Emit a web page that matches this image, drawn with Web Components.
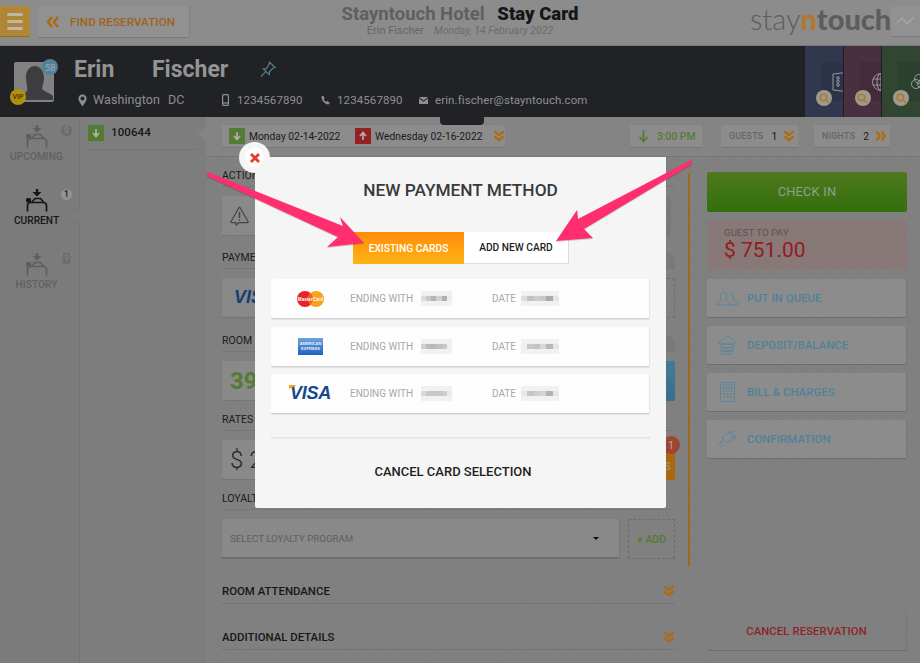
<!DOCTYPE html>
<html lang="en">
<head>
<meta charset="utf-8">
<title>Stay Card</title>
<style>
  html, body { margin: 0; padding: 0; }
  body {
    width: 920px; height: 663px; overflow: hidden; position: relative;
    background: #939393; color: #1e1e1e;
    font-family: Roboto, "Noto Sans", "Liberation Sans", sans-serif;
  }
  app-page { height: 663px; }
</style>
</head>
<body>
<app-page>
  <app-header slot="header"></app-header>
  <guest-bar slot="guest"></guest-bar>
  <side-nav slot="nav">
    <nav-item label="UPCOMING" count="0"></nav-item>
    <nav-item label="CURRENT" count="1" active></nav-item>
    <nav-item label="HISTORY" count="119"></nav-item>
  </side-nav>
  <res-list slot="list"></res-list>
  <stay-strip slot="strip"></stay-strip>
  <stay-form slot="form"></stay-form>
  <stay-actions slot="actions"></stay-actions>
</app-page>
<payment-modal>
  <card-row brand="mc"></card-row>
  <card-row brand="amex"></card-row>
  <card-row brand="visa"></card-row>
</payment-modal>

<script>
const CHEV_DOWN = `<svg width="12" height="12" viewBox="0 0 12 12" fill="none" stroke="#c47a14" stroke-width="2.4"><path d="M1.5 1.5 6 5l4.500-3.500M1.500 6.500 6 10l4.500-3.500"/></svg>`;
const CHEV_RIGHT = `<svg width="12" height="12" viewBox="0 0 12 12" fill="none" stroke="#c47a14" stroke-width="2.4"><path d="M1.500 1.500 5 6l-3.500 4.500M6.500 1.500 10 6l-3.500 4.500"/></svg>`;
const ARROW_SQ = (bg, up) => `<svg width="16" height="16" viewBox="0 0 16 16"><rect width="16" height="16" fill="${bg}"/><path d="${up ? 'M8 12V5M5 8l3-3.400L11 8' : 'M8 4v7M5 8l3 3.400L11 8'}" fill="none" stroke="#c8c8c8" stroke-width="1.700"/></svg>`;

class ShadowBase extends HTMLElement {
    constructor() {
        super();
        this.attachShadow({ mode: 'open' });
    }
    connectedCallback() {
        if (!this._rendered) {
            this.shadowRoot.innerHTML = this.markup();
            this._rendered = true;
        }
    }
}

class AppPage extends ShadowBase {
    markup() {
        return `
        <style>
          :host { display: flex; flex-direction: column; width: 920px; }
          .body { flex: 1; display: flex; min-height: 0; }
          .main { flex: 1; display: flex; flex-direction: column; min-width: 0; background: #939393 repeating-linear-gradient(45deg, rgba(0,0,0,.025) 0 1px, transparent 1px 3px); }
          .cols { flex: 1; display: flex; min-height: 0; }
        </style>
        <slot name="header"></slot>
        <slot name="guest"></slot>
        <div class="body">
          <slot name="nav"></slot>
          <slot name="list"></slot>
          <div class="main">
            <slot name="strip"></slot>
            <div class="cols">
              <slot name="form"></slot>
              <slot name="actions"></slot>
            </div>
          </div>
        </div>`;
    }
}

class AppHeader extends ShadowBase {
    markup() {
        return `
        <style>
          :host { display: flex; align-items: flex-start; padding-top: 6px; height: 39px; background: #a0a0a0; border-bottom: 1px solid #8a8a8a; }
          .menu { width: 30px; height: 31px; background: #c9993f; border-radius: 0 2px 2px 0; border-bottom: 1px solid #a87c2c; box-sizing: border-box; display: flex; flex-direction: column; justify-content: center; gap: 4px; padding: 0 7px; }
          .menu i { display: block; height: 3px; border-radius: 2px; background: #d9d0bd; }
          .find { margin-left: 8px; width: 152px; height: 32px; box-sizing: border-box; background: #a6a6a6; border-bottom: 1px solid #8a8a8a; border-right: 1px solid #929292; border-radius: 2px; display: flex; align-items: center; padding-left: 8px; gap: 11px; color: #b5701c; font-size: 11.600px; font-weight: 500; letter-spacing: .1px; }
          .title { flex: 1; text-align: center; margin-top: -1px; padding-right: 20px; }
          .top { font-size: 18.500px; font-weight: 700; color: #6d6d6d; white-space: nowrap; line-height: 18px; }
          .top b { color: #1a1a1a; margin-left: 8px; }
          .sub { font-size: 11px; color: #737373; white-space: nowrap; line-height: 14px; margin-top: 1px; }
          .sub em { color: #7b7b7b; margin-left: 7px; font-size: 10.500px; }
          .logo { font-family: Lato, sans-serif; font-size: 29px; line-height: 30px; color: #6a6a6a; font-weight: 300; white-space: nowrap; width: 141px; flex: none; margin-top: -2px; }
          .logo b { font-weight: 900; }
          .logo .n { color: #c98a34; }
          .graph { width: 29px; height: 31px; flex: none; background: #a6a6a6; border-bottom: 1px solid #8a8a8a; box-sizing: border-box; display: flex; align-items: center; justify-content: center; }
        </style>
        <div class="menu"><i></i><i></i><i></i></div>
        <div class="find">
          <svg width="13" height="12" viewBox="0 0 13 12" fill="none" stroke="#c47a14" stroke-width="2.600"><path d="M6 1 2 6l4 5M12 1 8 6l4 5"/></svg>
          <span>FIND RESERVATION</span>
        </div>
        <div class="title">
          <div class="top">Stayntouch Hotel <b>Stay Card</b></div>
          <div class="sub">Erin Fischer <em>Monday, 14 February 2022</em></div>
        </div>
        <div class="logo">stay<b class="n">n</b><b>touch</b></div>
        <div class="graph"><svg width="20" height="12" viewBox="0 0 20 12" fill="none" stroke="#bdbdbd" stroke-width="1.400"><path d="M1 8l5-5 5 6 7-7"/></svg></div>`;
    }
}

class GuestBar extends ShadowBase {
    markup() {
        const tile = (bg, icon) => `<div class="tile" style="background:${bg}"><div class="inner">${icon}</div><span class="mag"><svg width="11" height="11" viewBox="0 0 11 11" fill="none" stroke="#c98a30" stroke-width="1.600"><circle cx="4.400" cy="4.400" r="3.200"/><path d="M6.800 6.800 10 10"/></svg></span></div>`;
        return `
        <style>
          :host { display: flex; height: 71px; background: #26272b; color: #a3a3a3; }
          .avatar { position: relative; width: 40px; height: 40px; margin: 16px 0 0 14px; background: #939393; border-radius: 2px; flex: none; }
          .avatar svg { display: block; }
          .age { position: absolute; right: -4px; top: -3px; width: 16px; height: 16px; border-radius: 50%; background: #6093aa; color: #a8c3cf; font-size: 9.500px; display: grid; place-items: center; }
          .vip { position: absolute; left: -4px; bottom: -3px; width: 16px; height: 16px; border-radius: 50%; background: #c9a40e; color: #5e4f08; font-size: 7px; font-weight: 700; display: grid; place-items: center; }
          .info { flex: 1; margin-left: 20px; min-width: 0; }
          .name { display: flex; align-items: center; margin-top: 7px; height: 32px; font-size: 23px; font-weight: 700; color: #a9a9a9; }
          .name svg { margin-left: 32px; }
          .row { display: flex; align-items: center; margin-top: 5px; font-size: 11.500px; letter-spacing: .1px; white-space: nowrap; line-height: 20px; }
          .row svg { flex: none; }
          .tiles { display: flex; width: 116px; flex: none; }
          .tile { flex: 1; position: relative; border-left: 1px solid #23242a; overflow: hidden; }
          .inner { position: absolute; left: 16px; top: 16px; width: 40px; height: 39px; background: rgba(0,0,0,.08); display: flex; align-items: center; padding-left: 11px; box-sizing: border-box; }
          .mag { position: absolute; left: 11px; bottom: 11px; width: 16px; height: 16px; border-radius: 50%; background: #b5b0a5; display: grid; place-items: center; }
        </style>
        <div class="avatar">
          <svg width="40" height="40" viewBox="0 0 40 40"><path d="M8 38c0-4 3-7 5-9 1-4-1-8-1-14 0-7 4-11 9-11s9 5 9 12c0 5-2 8-2 11 3 3 8 4 11 7v4z" fill="#44464b"/></svg>
          <span class="age">58</span><span class="vip">VIP</span>
        </div>
        <div class="info">
          <div class="name"><span style="width:78px">Erin</span><span>Fischer</span>
            <svg width="16" height="17" viewBox="0 0 16 17" fill="none" stroke="#5f93ab" stroke-width="1.200"><path d="M9.500 1.200 15 6.400l-2 .6-3.400 3.600-.4 3L3.400 8l3-.3L9 3.400zM5.500 10.800 1 15.600"/></svg>
          </div>
          <div class="row">
            <svg style="margin-left:4px" width="9" height="13" viewBox="0 0 9 13"><path d="M4.500.5C2 .5.4 2.300.4 4.500c0 2.600 3 6 4.100 8 1.100-2 4.100-5.400 4.100-8C8.600 2.300 7 .5 4.500.5zm0 6a2 2 0 1 1 0-4 2 2 0 0 1 0 4z" fill="#a3a3a3"/></svg>
            <span style="margin-left:6px;width:75px;font-size:12.500px">Washington</span><span style="width:54px;font-size:12.500px">DC</span>
            <svg width="7" height="12" viewBox="0 0 7 12" fill="none" stroke="#a3a3a3" stroke-width="1.200"><rect x=".6" y=".6" width="5.800" height="10.800" rx="1"/><path d="M.6 9h5.800"/></svg>
            <span style="margin-left:8px;width:84px">1234567890</span>
            <svg width="9" height="10" viewBox="0 0 9 10"><path d="M2 .5 3.600 3 2.800 4.300c.5 1.200 1.200 2 2.400 2.500L6.400 6 8.800 7.800 7.500 9.500C3.500 9.300.4 5.500.5 1.600z" fill="#a3a3a3"/></svg>
            <span style="margin-left:7px;width:82px">1234567890</span>
            <svg width="9" height="7" viewBox="0 0 9 7"><path d="M0 0h9L4.500 3.500zM0 1.300 4.500 4.800 9 1.300V7H0z" fill="#a3a3a3"/></svg>
            <span style="margin-left:7px">erin.fischer@stayntouch.com</span>
          </div>
        </div>
        <div class="tiles">
          ${tile('#384059', `<svg width="14" height="20" viewBox="0 0 14 20" fill="none" stroke="#b5b8c2" stroke-width=".9"><path d="M1 2 13 .6v18.800L1 18z"/><circle cx="6" cy="6" r="1.300"/><circle cx="6" cy="9.500" r="1.300"/><circle cx="6" cy="13" r="1.300"/></svg>`)}
          ${tile('#553648', `<svg width="20" height="20" viewBox="0 0 20 20" fill="none" stroke="#bfb3ba" stroke-width=".9"><circle cx="10" cy="10" r="8.500"/><ellipse cx="10" cy="10" rx="4" ry="8.500"/><path d="M2 7h16M2 13h16M10 1.500v17"/></svg>`)}
          ${tile('#37503a', `<svg width="20" height="18" viewBox="0 0 20 18" fill="none" stroke="#b5beb6" stroke-width=".9"><circle cx="10" cy="6" r="4.500"/><circle cx="7" cy="11" r="4.500"/><circle cx="13" cy="11" r="4.500"/></svg>`)}
        </div>`;
    }
}

class SideNav extends ShadowBase {
    markup() {
        return `
        <style>
          :host { display: flex; flex-direction: column; width: 80px; flex: none; background: #8c8c8c; padding-top: 8px; box-sizing: border-box; border-right: 1px solid #858585; }
          ::slotted(nav-item) { margin-bottom: 18px; }
        </style>
        <slot></slot>`;
    }
}

class NavItem extends ShadowBase {
    markup() {
        const active = this.hasAttribute('active');
        const col = active ? '#1a1a1a' : '#6b6b6b';
        return `
        <style>
          :host { display: flex; flex-direction: column; align-items: center; height: 46px; position: relative; padding-right: 6px; }
          .label { font-size: 10.200px; line-height: 14px; margin-top: 2px; font-weight: 500; color: ${active ? '#1a1a1a' : '#6f6f6f'}; }
          .count { position: absolute; left: 61px; top: 0; width: 11px; height: 11px; border-radius: 50%; background: ${active ? '#a8a8a8' : '#7b7b7b'}; color: ${active ? '#1a1a1a' : '#969696'}; font-size: 8.500px; font-weight: 500; line-height: 11px; display: flex; justify-content: center; white-space: nowrap; }
          .notch { position: absolute; right: -1px; top: 20px; width: 0; height: 0; border: 7px solid transparent; border-right: 7px solid #8f8f8f; border-left: 0; display: ${active ? 'block' : 'none'}; }
        </style>
        <svg width="22" height="23" viewBox="0 0 22 23" fill="none" stroke="${col}" stroke-width="1.700">
          <path d="M11 0v3" stroke-width="2.400"/><path d="M6.500 3h9L11 7.500z" fill="${col}" stroke="none"/>
          <path d="M1.500 22.500v-6C1.500 14.500 3 13.500 5 13.500h12c2 0 3.500 1 3.500 3v6"/>
          <path d="M6 13 9 9.500h5.500l3 3.500"/>
          <rect x="0" y="9" width="5" height="4.500" rx="1.500" fill="${col}" stroke="none"/>
        </svg>
        <div class="label">${this.getAttribute('label')}</div>
        <span class="count">${this.getAttribute('count')}</span>
        <span class="notch"></span>`;
    }
}

class ResList extends ShadowBase {
    markup() {
        return `
        <style>
          :host { display: block; width: 126px; flex: none; background: #8f8f8f; padding: 8px 8px 0 8px; box-sizing: border-box; position: relative; }
          .row { display: flex; align-items: center; gap: 7px; height: 16px; padding-bottom: 8px; border-bottom: 1px solid #848484; font-size: 11.500px; font-weight: 500; color: #1a1a1a; }
          .row span { margin-top: -3px; letter-spacing: .1px; }
          .notch { position: absolute; right: 0; top: 9px; border: 8px solid transparent; border-right: 8px solid #979797; border-left: 0; }
          svg { display: block; }
        </style>
        <div class="row">${ARROW_SQ('#5f8d39', false)}<span>100644</span></div>
        <span class="notch"></span>`;
    }
}

class StayChip extends ShadowBase {
    markup() {
        return `
        <style>
          :host { display: flex; align-items: center; height: 23px; background: #a0a0a0; border-bottom: 1px solid #888; border-radius: 2px; box-sizing: border-box; font-size: 10.300px; white-space: nowrap; }
          ::slotted(svg) { flex: none; display: block; }
        </style>
        <slot></slot>`;
    }
}

class StayStrip extends ShadowBase {
    markup() {
        return `
        <style>
          :host { display: flex; height: 40px; flex: none; box-sizing: border-box; padding: 8px 30px 0 16px; background: #979797; border-bottom: 1px solid #888; position: relative; }
          .tab { position: absolute; left: 234px; top: 0; width: 44px; height: 8px; background: #26272b; border-radius: 0 0 4px 4px; }
          .l { color: #747474; font-size: 8.800px; font-weight: 500; letter-spacing: .3px; }
          .dates { width: 283px; padding-left: 7px; margin-right: 125px; }
          .time { width: 72px; padding-left: 8px; margin-right: 19px; }
          .guests { width: 77px; padding-left: 8px; margin-right: 16px; }
          .nights { width: 76px; padding-left: 8px; }
          .d { width: 90px; margin-left: 4px; }
        </style>
        <span class="tab"></span>
        <stay-chip class="dates">
          ${ARROW_SQ('#5f8d39', false)}<span class="d" style="margin-right:16px">Monday 02-14-2022</span>
          ${ARROW_SQ('#a82626', true)}<span class="d" style="width:113px">Wednesday 02-16-2022</span>
          <span style="margin-left:6px;display:flex">${CHEV_DOWN}</span>
        </stay-chip>
        <stay-chip class="time">
          <svg width="11" height="14" viewBox="0 0 11 14" fill="none" stroke="#5f8d39" stroke-width="1.800"><path d="M5.500 1v11M1.500 8l4 4.500 4-4.500"/></svg>
          <span style="margin-left:8px;color:#5f8d39;font-weight:500">3:00 PM</span>
        </stay-chip>
        <stay-chip class="guests"><span class="l">GUESTS</span><span style="margin-left:8px">1</span><span style="margin-left:6px;display:flex">${CHEV_DOWN}</span></stay-chip>
        <stay-chip class="nights"><span class="l">NIGHTS</span><span style="margin-left:8px">2</span><span style="margin-left:6px;display:flex">${CHEV_RIGHT}</span></stay-chip>`;
    }
}

class FormSection extends ShadowBase {
    markup() {
        const pill = this.hasAttribute('pill') ? '<span class="pill"></span>' : '';
        return `
        <style>
          :host { display: block; }
          .head { display: flex; align-items: center; height: 21px; padding-bottom: 2px; box-sizing: border-box; border-bottom: 1px solid #878787; font-size: 10.500px; color: #222; margin-bottom: 9px; position: relative; overflow: hidden; }
          .pill { position: absolute; right: 0; bottom: 0; width: 26px; height: 16px; background: #8a8a8a; border-radius: 10px 10px 0 0; }
          .body { display: flex; gap: 8px; height: 40px; }
        </style>
        <div class="head">${this.getAttribute('label')}${pill}</div>
        <div class="body"><slot></slot></div>`;
    }
}

class StayForm extends ShadowBase {
    markup() {
        return `
        <style>
          :host { display: block; width: 453px; flex: none; margin-left: 16px; padding-top: 9px; }
          .card { background: #9d9d9d; border-bottom: 1px solid #848484; border-radius: 2px; flex: 1; display: flex; align-items: center; box-sizing: border-box; padding-left: 8px; position: relative; }
          .bar { position: absolute; right: 0; top: 0; bottom: 0; width: 6px; background: #8a8a8a; border-radius: 2px; }
          .dash { flex: none; width: 47px; border: 1px dashed #7d7d7d; box-sizing: border-box; display: grid; place-items: center; color: #5f8d39; font-size: 10.500px; font-weight: 500; }
          .blue { flex: none; width: 60px; background: linear-gradient(#4d8ea6, #3e7fa3); border-radius: 2px; }
          .orange { flex: none; width: 60px; background: #c4760f; border-radius: 2px; position: relative; color: #b5a894; font-size: 11px; font-weight: 500; display: flex; align-items: flex-end; justify-content: flex-end; padding: 0 4px 7px 0; box-sizing: border-box; }
          .badge { position: absolute; right: -5px; top: -4px; width: 18px; height: 18px; border-radius: 50%; background: #b6503a; color: #d5c2bc; font-size: 10px; font-weight: 400; display: grid; place-items: center; }
          .num { font-size: 24px; font-weight: 700; color: #5f8d39; }
          .rate { font-size: 24px; color: #2a2a2a; font-weight: 300; }
          .select { flex: none; width: 398px; height: 40px; background: #9d9d9d; border-bottom: 2px solid #7e7e7e; border-right: 1px solid #888; display: flex; align-items: center; justify-content: space-between; padding: 0 20px 0 8px; box-sizing: border-box; color: #6c6c6c; font-size: 9.700px; }
          .caret { width: 0; height: 0; border: 3px solid transparent; border-top: 3.500px solid #111; border-bottom: 0; }
          .fold { display: flex; align-items: center; justify-content: space-between; height: 24px; border-bottom: 1px solid #838383; font-size: 11.400px; font-weight: 500; color: #1a1a1a; margin-bottom: 21px; }
          .visa { font: italic 700 18px "Liberation Sans", sans-serif; color: #1a4780; margin-left: 4px; }
        </style>
        <form-section label="ACTIONS" style="margin-bottom:12px">
          <div class="card" style="margin-right:4px">
            <svg width="20" height="20" viewBox="0 0 20 20" fill="none" stroke="#4f4f4f" stroke-width="1.200"><path d="M9 1.500 1 15.500c-.3.700 0 1.200.8 1.200H6v2.300l3-2.300h8.200c.8 0 1.100-.5.800-1.200l-8-14c-.3-.400-.700-.400-1 0z"/><path d="M9.500 6v6M9.500 13.300v1.500" stroke-width="1.500"/></svg>
            <span class="bar"></span>
          </div>
        </form-section>
        <form-section label="PAYMENT" pill style="margin-bottom:13px">
          <div class="card"><span class="visa">VISA</span></div>
          <div class="dash"></div>
        </form-section>
        <form-section label="ROOM" pill style="margin-bottom:9px">
          <div class="card"><span class="num">39</span></div>
          <div class="blue"></div>
        </form-section>
        <form-section label="RATES &amp; ADDONS" style="margin-bottom:9px">
          <div class="card"><span class="rate">$ 2</span></div>
          <div class="orange">S<span class="badge">1</span></div>
        </form-section>
        <form-section label="LOYALTY" style="margin-bottom:20px">
          <div class="select"><span>SELECT LOYALTY PROGRAM</span><span class="caret"></span></div>
          <div class="dash">+ ADD</div>
        </form-section>
        <div class="fold"><span>ROOM ATTENDANCE</span>${CHEV_DOWN}</div>
        <div class="fold"><span>ADDITIONAL DETAILS</span>${CHEV_DOWN}</div>`;
    }
}

class ActionButton extends ShadowBase {
    markup() {
        const icon = this.hasAttribute('plain') ? '' : '<span class="ico"><slot name="icon"></slot></span>';
        return `
        <style>
          :host { display: flex; align-items: center; height: 39px; background: #a0a0a0; border-bottom: 1px solid #7d7d7d; border-right: 1px solid #888; border-radius: 2px; box-sizing: border-box; color: #5c93ae; font-size: 11.300px; font-weight: 500; letter-spacing: .1px; }
          .ico { width: 40px; display: flex; justify-content: center; flex: none; }
        </style>
        ${icon}<slot></slot>`;
    }
}

class StayActions extends ShadowBase {
    markup() {
        const s = 'fill="none" stroke="#6298b2" stroke-width="1"';
        return `
        <style>
          :host { display: flex; flex-direction: column; width: 200px; flex: none; margin-left: 32px; padding-top: 15px; padding-bottom: 12px; box-sizing: border-box; position: relative; }
          :host::before { content: ""; position: absolute; left: -19px; top: 16px; height: 393px; width: 2px; background: #ac7a1f; }
          .checkin { height: 40px; background: linear-gradient(#5a8a20, #3a7f10); border-radius: 2px; display: grid; place-items: center; color: #a9b4a0; font-size: 12.800px; letter-spacing: .2px; flex: none; padding-bottom: 1px; box-sizing: border-box; }
          .pay { height: 50px; margin: 8px 0 9px; background: #9b8989; border-radius: 2px; padding: 6px 0 0 17px; box-sizing: border-box; flex: none; }
          .pay small { display: block; font-size: 9.800px; line-height: 13px; color: #6c6060; }
          .pay b { display: block; font-size: 21px; font-weight: 400; line-height: 23px; color: #a92222; }
          action-button { flex: none; margin-bottom: 8px; }
          .cancel { margin-top: auto; margin-bottom: 0; justify-content: center; color: #a32a2a; background: #929292; }
        </style>
        <div class="checkin">CHECK IN</div>
        <div class="pay"><small>GUEST TO PAY</small><b>$ 751.00</b></div>
        <action-button>
          <svg slot="icon" width="25" height="15" viewBox="0 0 25 15" ${s}><path d="M1 14c0-3 3-3 5-4 1-1 0-2-.5-3C5 4 6 1 8.500 1s3.500 3 3 6c-.5 1-1.500 2-.5 3 2 1 4 1 4 4z"/><path d="M14 3.500c1-1 4-1 4.500 1.500 0 1.500-.5 3-1 3.500 1 1 6 .5 6 4 0 .8-.5 1.500-2 1.500H15"/></svg>
          PUT IN QUEUE</action-button>
        <action-button>
          <svg slot="icon" width="20" height="20" viewBox="0 0 20 20" ${s}><path d="M1 9 10 1l6 3 3 5"/><path d="M1 9h16"/><rect x="4" y="9" width="12" height="3.500" rx="1.700"/><rect x="4" y="12.500" width="12" height="3.500" rx="1.700"/><rect x="4" y="16" width="12" height="3" rx="1.500"/></svg>
          DEPOSIT/BALANCE</action-button>
        <action-button>
          <svg slot="icon" width="15" height="20" viewBox="0 0 15 20" ${s}><rect x=".5" y=".5" width="14" height="19" rx="1.500"/><rect x="3" y="3" width="9" height="3"/><path d="M3 9h2M6.500 9h2M10 9h2M3 12h2M6.500 12h2M10 12h2M3 15h2M6.500 15h2M10 15h2" stroke-width="1.500"/></svg>
          BILL &amp; CHARGES</action-button>
        <action-button>
          <svg slot="icon" width="20" height="18" viewBox="0 0 20 18" ${s}><path d="M5 8 14 1l5 6-9 6z"/><path d="M14 1v5.500L19 7M5 8l5 5M3 12l3-2M1 15l4-3M4 17l3-3"/></svg>
          CONFIRMATION</action-button>
        <action-button class="cancel" plain>CANCEL RESERVATION</action-button>`;
    }
}

class BlurValue extends ShadowBase {
    markup() {
        const cells = (this.getAttribute('cells') || '').split(',');
        const w = this.getAttribute('w') || 32;
        // mosaic look: pale rows above and below the darker middle row
        const pale = cells.map(() => 'f1f1f1');
        const all = [...pale, ...cells, ...pale];
        return `
        <style>
          :host { display: inline-grid; grid-template-columns: repeat(${cells.length}, 1fr); grid-auto-rows: 5px; width: ${w}px; flex: none; }
          i { display: block; }
        </style>
        ${all.map(c => `<i style="background:#${c}"></i>`).join('')}`;
    }
}

class CardRow extends ShadowBase {
    markup() {
        const brand = this.getAttribute('brand');
        const logos = {
            mc: `<svg width="27" height="16" viewBox="0 0 27 16"><circle cx="8" cy="8" r="8" fill="#e8232a"/><circle cx="19" cy="8" r="8" fill="#f7a11d"/><path d="M13.500 2.200a8 8 0 0 1 0 11.600 8 8 0 0 1 0-11.600z" fill="#f15d22"/><text x="13.500" y="9.500" text-anchor="middle" font-size="4.600" font-weight="700" fill="#fff" font-family="Liberation Sans, sans-serif">MasterCard</text></svg>`,
            amex: `<svg width="25" height="17" viewBox="0 0 25 17"><defs><linearGradient id="a" x1="0" y1="0" x2="0" y2="1"><stop offset="0" stop-color="#6fa4dc"/><stop offset="1" stop-color="#1f5fc0"/></linearGradient></defs><rect width="25" height="17" fill="url(#a)"/><text x="12.500" y="6.500" text-anchor="middle" font-size="4" font-weight="700" fill="#e6f0fb" font-family="Liberation Sans, sans-serif">AMERICAN</text><text x="12.500" y="12" text-anchor="middle" font-size="4" font-weight="700" fill="#e6f0fb" font-family="Liberation Sans, sans-serif">EXPRESS</text></svg>`,
            visa: `<span class="visa">VISA<i></i></span>`
        };
        const vals = {
            mc: ['dcdcdc,c8c8c8,b4b4b4,d0d0d0,b0b0b0,ececec', 'dedede,c2c2c2,cccccc,c8c8c8,acacac,e6e6e6'],
            amex: ['d0d0d0,bcbcbc,b8b8b8,c0c0c0,c8c8c8,f0f0f0', 'f0f0f0,c8c8c8,c4c4c4,d8d8d8,b8b8b8,e6e6e6'],
            visa: ['d8d8d8,c8c8c8,c8c8c8,c8c8c8,cccccc,eaeaea', 'eaeaea,c6c6c6,cecece,d4d4d4,b2b2b2,e6e6e6']
        };
        return `
        <style>
          :host { display: flex; align-items: center; height: 40px; background: #fdfdfd; border-bottom: 1px solid #d2d2d2; border-right: 1px solid #e6e6e6; border-radius: 2px; box-sizing: border-box; color: #a8a8a8; font-size: 10px; white-space: nowrap; box-shadow: 0 1px 1px rgba(0,0,0,.08); }
          .logo { width: 79px; display: flex; justify-content: center; flex: none; }
          .visa { font: italic 700 18px "Liberation Sans", sans-serif; color: #17488f; position: relative; letter-spacing: -.2px; }
          .visa i { position: absolute; left: -1px; top: 2px; border-left: 8px solid #f2a51f; border-bottom: 4px solid transparent; }
          .e { width: 71px; flex: none; }
          .d { width: 29px; flex: none; margin-left: 40px; }
        </style>
        <span class="logo">${logos[brand]}</span>
        <span class="e">ENDING WITH</span><blur-value cells="${vals[brand][0]}" w="31"></blur-value>
        <span class="d">DATE</span><blur-value cells="${vals[brand][1]}" w="38"></blur-value>`;
    }
}

class PaymentModal extends ShadowBase {
    markup() {
        const left = 'M208 172 343 226 340 217 364 243 327 247 338 237 207 176Z';
        const right = 'M691 160 578 219 577 210 556 241 593 238 584 229 692 164Z';
        return `
        <style>
          :host { display: block; position: absolute; left: 0; top: 0; width: 920px; height: 663px; }
          .backdrop { position: absolute; inset: 0; background: rgba(0,0,0,.12); }
          .panel { position: absolute; left: 255px; top: 157px; width: 411px; height: 351px; background: #f5f5f5; border-radius: 0 0 2px 2px; display: flex; flex-direction: column; padding: 0 16px; box-sizing: border-box; }
          h2 { margin: 22px 0 0; text-align: center; font-size: 17.300px; line-height: 22px; font-weight: 500; color: #3a3a3a; }
          .tabs { display: flex; margin: 31px 0 0 82px; height: 32px; }
          .tab { display: grid; place-items: center; font-size: 10.200px; font-weight: 500; box-sizing: border-box; }
          .on { width: 111px; background: linear-gradient(#ff8c0a, #ffb316); color: #fff; }
          .off { width: 105px; background: #fff; color: #1e1e1e; border-right: 1px solid #dcdcdc; border-bottom: 1px solid #dcdcdc; }
          .cards { display: flex; flex-direction: column; gap: 8px; margin-top: 15px; }
          ::slotted(card-row:nth-child(2)) { margin-bottom: -1px; }
          .rule { height: 1px; background: #e2e2e2; margin-top: 23px; box-shadow: 0 1px 0 #ebebeb; }
          .cancel { text-align: center; margin-top: 24px; font-size: 13px; line-height: 20px; font-weight: 500; color: #1e1e1e; padding-right: 15px; }
          .close { position: absolute; left: 239px; top: 142px; width: 31px; height: 31px; border-radius: 50%; background: #f5f5f5; display: grid; place-items: center; }
          .close span { width: 19px; height: 19px; border-radius: 50%; background: #fff; display: grid; place-items: center; }
          .arrows { position: absolute; left: 0; top: 0; }
        </style>
        <div class="backdrop"></div>
        <div class="panel">
          <h2>NEW PAYMENT METHOD</h2>
          <div class="tabs"><div class="tab on">EXISTING CARDS</div><div class="tab off">ADD NEW CARD</div></div>
          <div class="cards"><slot></slot></div>
          <div class="rule"></div>
          <div class="cancel">CANCEL CARD SELECTION</div>
        </div>
        <div class="close"><span><svg width="10" height="10" viewBox="0 0 10 10" stroke="#e8392e" stroke-width="2.800"><path d="M1 1l8 8M9 1 1 9"/></svg></span></div>
        <svg class="arrows" width="920" height="663" viewBox="0 0 920 663">
          <g transform="translate(0 1)" fill="#000" fill-opacity=".18"><path d="${left}"/><path d="${right}"/></g>
          <path d="${left}" fill="#ff2e6e"/>
          <path d="${right}" fill="#ff2e6e"/>
        </svg>`;
    }
}

customElements.define('app-page', AppPage);
customElements.define('app-header', AppHeader);
customElements.define('guest-bar', GuestBar);
customElements.define('side-nav', SideNav);
customElements.define('nav-item', NavItem);
customElements.define('res-list', ResList);
customElements.define('stay-chip', StayChip);
customElements.define('stay-strip', StayStrip);
customElements.define('form-section', FormSection);
customElements.define('stay-form', StayForm);
customElements.define('action-button', ActionButton);
customElements.define('stay-actions', StayActions);
customElements.define('blur-value', BlurValue);
customElements.define('card-row', CardRow);
customElements.define('payment-modal', PaymentModal);
</script>
</body>
</html>
